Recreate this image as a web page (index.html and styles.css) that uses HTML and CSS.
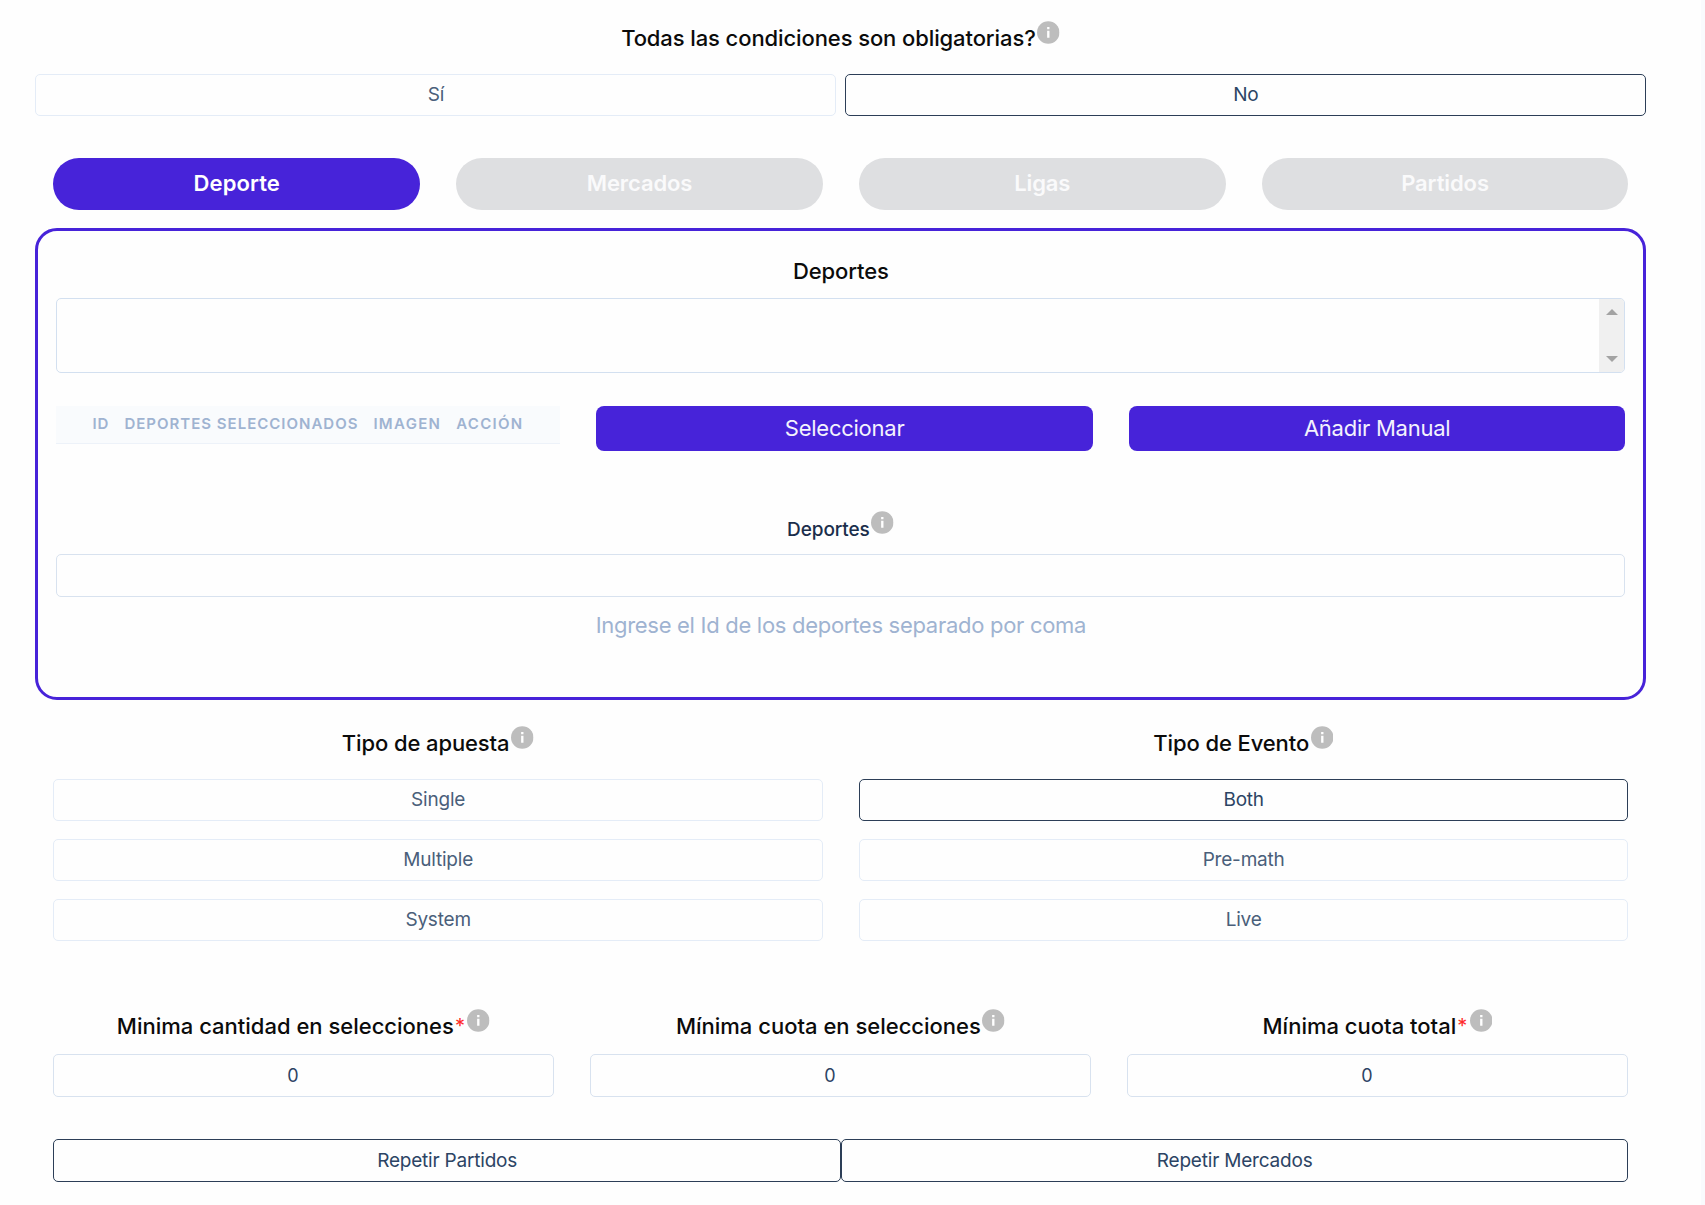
FILE: index.html
```html
<!DOCTYPE html>
<html lang="es">
<head>
<meta charset="utf-8">
<title>Condiciones</title>
<link rel="stylesheet" href="styles.css">
</head>
<body>
<svg class="defs" width="0" height="0" aria-hidden="true">
  <symbol id="info" viewBox="0 0 24 24">
    <circle cx="12" cy="12" r="12" fill="#bdbdbd"/>
    <path d="M10.8 6.2h2.5v2.3h-2.5zM10.8 10.1h2.5v7.5h-2.5z" fill="#fff"/>
  </symbol>
</svg>
<main class="page">
  <h2 class="heading"><span class="heading-text">Todas las condiciones son obligatorias?</span><svg class="info"><use href="#info"/></svg></h2>
  <div class="choice-row">
    <button class="option">Sí</button>
    <button class="option selected">No</button>
  </div>

  <nav class="tabs">
    <button class="tab active">Deporte</button>
    <button class="tab">Mercados</button>
    <button class="tab">Ligas</button>
    <button class="tab">Partidos</button>
  </nav>

  <section class="panel">
    <h2 class="heading"><span class="heading-text">Deportes</span></h2>
    <div class="listbox">
      <div class="scrollbar">
        <svg width="12" height="6" viewBox="0 0 12 6"><path d="M0 6L6 0l6 6z" fill="#a3a3a3"/></svg>
        <svg width="12" height="6" viewBox="0 0 12 6"><path d="M0 0l6 6 6-6z" fill="#a3a3a3"/></svg>
      </div>
    </div>
    <div class="actions">
      <div class="table-head">
        <span>ID</span><span>DEPORTES SELECCIONADOS</span><span class="wide">IMAGEN</span><span class="wide">ACCIÓN</span>
      </div>
      <button class="primary">Seleccionar</button>
      <button class="primary">Añadir Manual</button>
    </div>
    <div class="heading small"><span class="heading-text">Deportes</span><svg class="info"><use href="#info"/></svg></div>
    <div class="field"></div>
    <p class="hint">Ingrese el Id de los deportes separado por coma</p>
  </section>

  <div class="columns types">
    <section>
      <h2 class="heading"><span class="heading-text">Tipo de apuesta</span><svg class="info"><use href="#info"/></svg></h2>
      <div class="stack">
        <button class="option">Single</button>
        <button class="option">Multiple</button>
        <button class="option">System</button>
      </div>
    </section>
    <section>
      <h2 class="heading"><span class="heading-text">Tipo de Evento</span><svg class="info"><use href="#info"/></svg></h2>
      <div class="stack">
        <button class="option selected">Both</button>
        <button class="option">Pre-math</button>
        <button class="option">Live</button>
      </div>
    </section>
  </div>

  <div class="columns minimums">
    <section>
      <h2 class="heading"><span class="heading-text">Minima cantidad en selecciones</span><span class="required">*</span><svg class="info"><use href="#info"/></svg></h2>
      <div class="field number">0</div>
    </section>
    <section>
      <h2 class="heading"><span class="heading-text">Mínima cuota en selecciones</span><svg class="info"><use href="#info"/></svg></h2>
      <div class="field number">0</div>
    </section>
    <section>
      <h2 class="heading"><span class="heading-text">Mínima cuota total</span><span class="required">*</span><svg class="info"><use href="#info"/></svg></h2>
      <div class="field number">0</div>
    </section>
  </div>

  <div class="repeat">
    <button class="option selected">Repetir Partidos</button>
    <button class="option selected">Repetir Mercados</button>
  </div>
</main>
</body>
</html>
```
FILE: styles.css
```css
* { box-sizing: border-box; }

body {
  margin: 0;
  background: #f9fafd;
  font-family: Inter, "Liberation Sans", sans-serif;
  color: #2c4464;
}

button { font-family: inherit; margin: 0; }

.defs { display: block; }

.page {
  width: 1701px;
  height: 1205px;
  padding: 21px 54.6px 0 35.4px;
  background: #fefefe;
  overflow: hidden;
}

.heading {
  display: flex;
  justify-content: center;
  align-items: flex-start;
  height: 32px;
  margin: 0;
  font-size: 22px;
  font-weight: 500;
  line-height: 28px;
  letter-spacing: -0.1px;
  color: #0b0b0b;
}
.heading-text { padding-top: 3px; white-space: nowrap; }
.heading.small { font-size: 19px; color: #1b2e4b; }
.heading.small .heading-text { padding-top: 5px; }
.info { width: 22.5px; height: 23px; margin: 0 1px 0 1.5px; }
.required {
  padding: 3px 1px 0;
  font-size: 20px;
  font-weight: 400;
  color: #ff2a2a;
}

.choice-row {
  display: grid;
  grid-template-columns: 1fr 1fr;
  gap: 9px;
  margin-top: 21px;
}

.option {
  display: block;
  width: 100%;
  height: 42px;
  padding: 0 0 2px;
  border: 1px solid #e4ecf7;
  border-radius: 5px;
  background: transparent;
  font-size: 19px;
  letter-spacing: -0.2px;
  color: #4a5f7a;
}
.option.selected { border-color: #2c3e57; color: #2c4464; }

.tabs {
  display: grid;
  grid-template-columns: repeat(4, 1fr);
  gap: 36px;
  margin: 42px 18px 0;
}
.tab {
  height: 52px;
  padding: 0 0 2px;
  border: 0;
  border-radius: 26px;
  background: #dedfe1;
  font-size: 22px;
  font-weight: 600;
  letter-spacing: -0.1px;
  color: #fafafb;
}
.tab.active { background: #4723d9; color: #fff; letter-spacing: 0.1px; }

.panel {
  height: 472px;
  margin-top: 18px;
  padding: 23px 18px 0;
  border: 3px solid #4723d9;
  border-radius: 22px;
}

.listbox {
  display: flex;
  justify-content: flex-end;
  height: 75px;
  margin-top: 12px;
  border: 1px solid #d3e0f0;
  border-radius: 5px;
  overflow: hidden;
}
.scrollbar {
  display: flex;
  flex-direction: column;
  justify-content: space-between;
  align-items: center;
  width: 25px;
  padding: 10px 0;
  background: #f0f0f0;
}
.scrollbar svg { display: block; }

.actions {
  display: grid;
  grid-template-columns: 504px 1fr 1fr;
  column-gap: 36px;
  align-items: start;
  margin-top: 33px;
}
.table-head {
  display: flex;
  gap: 15px;
  height: 38px;
  padding-left: 36px;
  border-bottom: 1px solid #edf2f9;
  background: #f9fbfd;
  font-size: 15px;
  font-weight: 600;
  line-height: 36px;
  letter-spacing: 1px;
  white-space: nowrap;
  color: #9fb3d1;
}
.table-head .wide { letter-spacing: 1.3px; }
.primary {
  height: 45px;
  padding: 0 0 2px;
  border: 0;
  border-radius: 8px;
  background: #4723d9;
  font-size: 22px;
  letter-spacing: -0.25px;
  color: #f4f2fd;
}
.panel .small { margin-top: 60px; }

.field {
  height: 43px;
  border: 1px solid #d8e2ef;
  border-radius: 5px;
}
.panel .field { margin-top: 11px; }
.hint {
  margin: 14px 0 0;
  font-size: 22px;
  line-height: 28px;
  letter-spacing: -0.29px;
  text-align: center;
  color: #9fb3d1;
}

.columns { display: grid; column-gap: 36px; margin: 0 18px; }
.types { grid-template-columns: 1fr 1fr; padding-top: 26px; }
.stack { display: grid; gap: 18px; margin-top: 21px; }
.minimums { grid-template-columns: repeat(3, 1fr); padding-top: 68px; }
.minimums .heading { letter-spacing: 0; }
.number {
  margin-top: 13px;
  padding-right: 22px;
  font-size: 18px;
  line-height: 41px;
  text-align: center;
}

.repeat {
  display: grid;
  grid-template-columns: 1fr 1fr;
  margin: 42px 18px 0;
}
.repeat .option { height: 43px; padding-bottom: 1px; }
```
